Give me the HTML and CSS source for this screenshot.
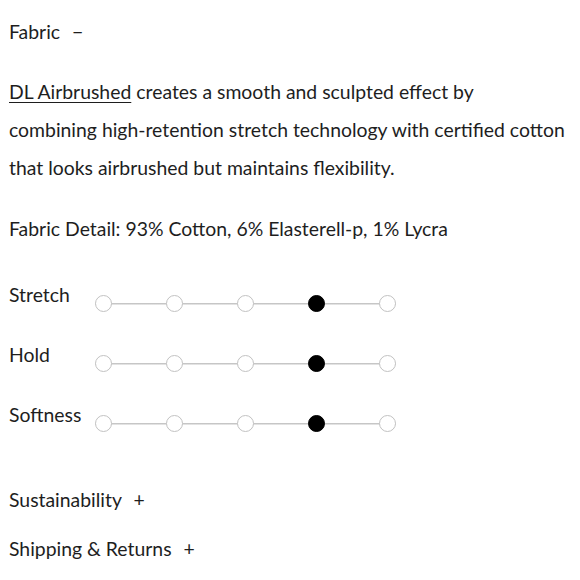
FILE: index.html
```html
<!DOCTYPE html>
<html>
<head>
<meta charset="utf-8">
<link rel="stylesheet" href="styles.css">
</head>
<body>
<div class="panel">
  <div class="section-head">Fabric <span class="sign">&minus;</span></div>
  <p class="desc"><a class="link" href="#">DL Airbrushed</a> creates a smooth and sculpted effect by<br>combining high-retention stretch technology with certified cotton<br>that looks airbrushed but maintains flexibility.</p>
  <p class="detail">Fabric Detail: 93% Cotton, 6% Elasterell-p, 1% Lycra</p>
  <div class="scales">
    <div class="scale">
      <span class="scale-label">Stretch</span>
      <div class="track">
        <span class="dot"></span><span class="dot"></span><span class="dot"></span><span class="dot on"></span><span class="dot"></span>
      </div>
    </div>
    <div class="scale">
      <span class="scale-label">Hold</span>
      <div class="track">
        <span class="dot"></span><span class="dot"></span><span class="dot"></span><span class="dot on"></span><span class="dot"></span>
      </div>
    </div>
    <div class="scale">
      <span class="scale-label">Softness</span>
      <div class="track">
        <span class="dot"></span><span class="dot"></span><span class="dot"></span><span class="dot on"></span><span class="dot"></span>
      </div>
    </div>
  </div>
  <div class="section-head closed">Sustainability <span class="sign">+</span></div>
  <div class="section-head closed2">Shipping &amp; Returns <span class="sign">+</span></div>
</div>
</body>
</html>
```
FILE: styles.css
```css
html, body {
  margin: 0;
  padding: 0;
  background: #fff;
}
body {
  font-family: Lato, "Open Sans", sans-serif;
  font-size: 19.4px;
  color: #1e1e1e;
}
.panel {
  padding: 20px 0 0 9px;
  width: 568px;
}
.section-head {
  line-height: 24px;
}
.sign {
  margin-left: 7px;
}
.desc {
  margin: 29px 0 0;
  line-height: 38px;
  white-space: nowrap;
}
.link {
  color: inherit;
  text-decoration: underline;
  text-underline-offset: 3px;
  text-decoration-thickness: 1px;
}
.detail {
  margin: 30px 0 0;
  line-height: 24px;
}
.scales {
  margin-top: 42px;
  display: flex;
  flex-direction: column;
  gap: 35px;
}
.scale {
  display: flex;
  align-items: flex-start;
  height: 25px;
}
.scale-label {
  width: 86px;
  line-height: 24px;
}
.track {
  display: flex;
  width: 301px;
  justify-content: space-between;
  background: linear-gradient(#c6c6c6, #c6c6c6) center 20px / 100% 1.5px no-repeat;
}
.dot {
  width: 17px;
  height: 17px;
  margin-top: 12px;
  box-sizing: border-box;
  border: 1.5px solid #c2c2c2;
  border-radius: 50%;
  background: #fff;
}
.dot.on {
  background: #000;
  border-color: #000;
}
.closed {
  margin-top: 60px;
}
.closed2 {
  margin-top: 25px;
}
```
